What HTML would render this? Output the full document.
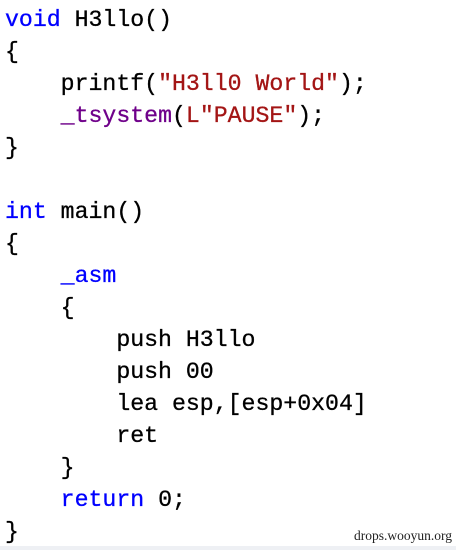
<html><head><style>
body{margin:0;width:456px;height:550px;background:#fff;overflow:hidden;position:relative}
pre{margin:0;position:absolute;left:5px;top:4px;font-family:"Liberation Mono",monospace;font-size:23.2px;line-height:32px;color:#000;-webkit-text-stroke:0.3px currentColor}
.k{color:#0000ff}.s{color:#a31515}.m{color:#6f008a}
.w{position:absolute;right:4px;top:528px;font-family:"Liberation Serif",serif;font-size:13.5px;color:#222}
.b{position:absolute;left:0;right:0;top:546px;height:4px;background:#eef0f4}
</style></head><body>
<pre><span class="k">void</span> H3llo()
{
    printf(<span class="s">"H3ll0 World"</span>);
    <span class="m">_tsystem</span>(<span class="s">L"PAUSE"</span>);
}

<span class="k">int</span> main()
{
    <span class="k">_asm</span>
    {
        push H3llo
        push 00
        lea esp,[esp+0x04]
        ret
    }
    <span class="k">return</span> 0;
}</pre>
<div class="w">drops.wooyun.org</div>
<div class="b"></div>
</body></html>
